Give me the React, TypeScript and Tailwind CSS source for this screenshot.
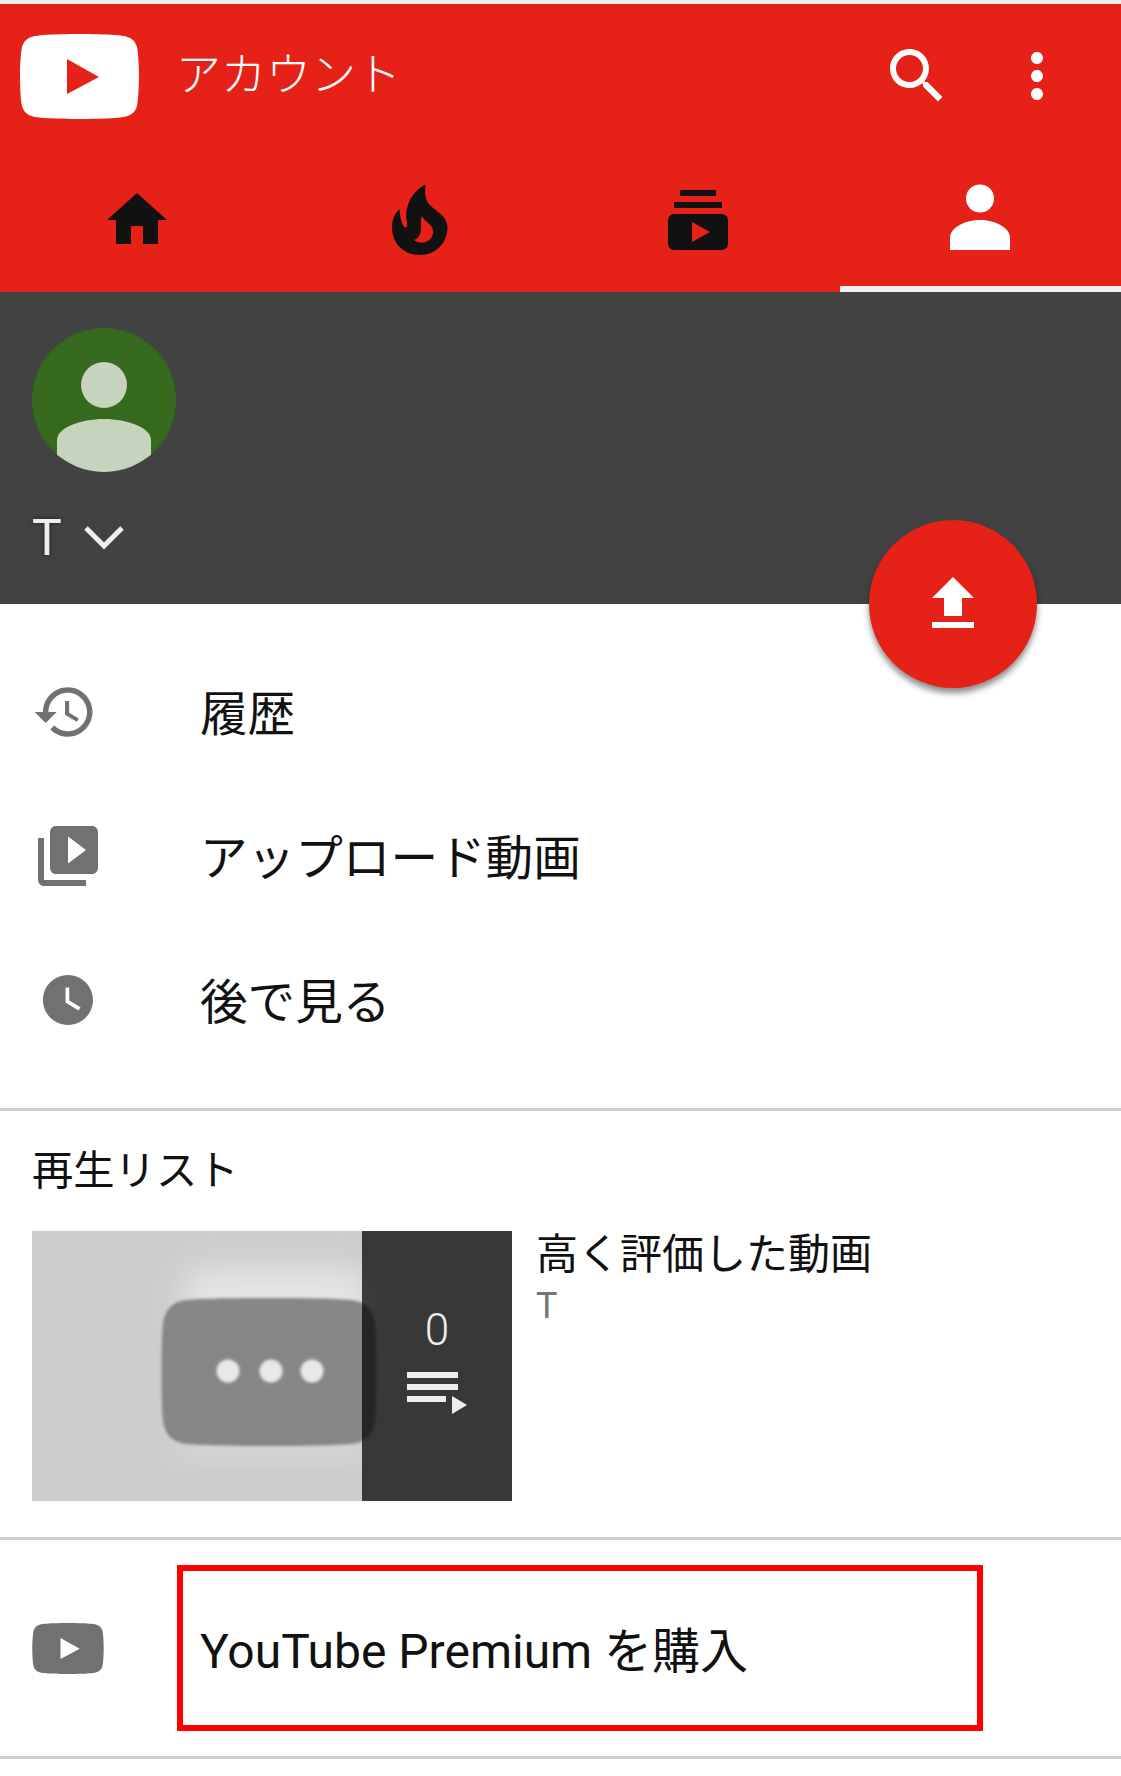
function YouTubeMark({ className }: { className: string }) {
  return (
    <svg viewBox="0 0 119 85" className={className} fill="currentColor" fillRule="evenodd">
      <path d="M59.5 0C59.5 0 22 0 13 2.5 7 4 3 8 1.8 14 0 24 0 42.5 0 42.5S0 61 1.8 71C3 77 7 81 13 82.5 22 85 59.5 85 59.5 85S97 85 106 82.5C112 81 116 77 117.2 71 119 61 119 42.5 119 42.5S119 24 117.2 14C116 8 112 4 106 2.5 97 0 59.5 0 59.5 0ZM47 25 79 43 47 60Z" />
    </svg>
  );
}

function Icon({ d, className }: { d: string; className: string }) {
  return (
    <svg viewBox="0 0 24 24" className={className} fill="currentColor">
      <path d={d} />
    </svg>
  );
}

const searchPath =
  "M15.5 14h-.79l-.28-.27C15.41 12.59 16 11.11 16 9.5 16 5.91 13.09 3 9.5 3S3 5.91 3 9.5 5.91 16 9.5 16c1.61 0 3.09-.59 4.23-1.57l.27.28v.79l5 4.99L20.49 19l-4.99-5zm-6 0C7.01 14 5 11.99 5 9.5S7.01 5 9.5 5 14 7.01 14 9.5 11.99 14 9.5 14z";
const morePath =
  "M12 8c1.1 0 2-.9 2-2s-.9-2-2-2-2 .9-2 2 .9 2 2 2zm0 2c-1.1 0-2 .9-2 2s.9 2 2 2 2-.9 2-2-.9-2-2-2zm0 6c-1.1 0-2 .9-2 2s.9 2 2 2 2-.9 2-2-.9-2-2-2z";
const homePath = "M10 20v-6h4v6h5v-8h3L12 3 2 12h3v8z";
const uploadPath = "M9 16h6v-6h4l-7-7-7 7h4zm-4 2h14v2H5z";
const historyPath =
  "M13 3c-4.97 0-9 4.03-9 9H1l3.89 3.89.07.14L9 12H6c0-3.87 3.13-7 7-7s7 3.13 7 7-3.13 7-7 7c-1.93 0-3.68-.79-4.94-2.06l-1.42 1.42C8.27 19.99 10.51 21 13 21c4.97 0 9-4.03 9-9s-4.03-9-9-9zm-1 5v5l4.28 2.54.72-1.21-3.5-2.08V8H12z";
const libraryPath =
  "M4 6H2v14c0 1.1.9 2 2 2h14v-2H4V6zm16-4H8c-1.1 0-2 .9-2 2v12c0 1.1.9 2 2 2h12c1.1 0 2-.9 2-2V4c0-1.1-.9-2-2-2zm-8 12.5v-9l6 4.5-6 4.5z";
const clockPath =
  "M12 2C6.5 2 2 6.5 2 12s4.5 10 10 10 10-4.5 10-10S17.5 2 12 2zm4.2 14.2L11 13V7h1.5v5.2l4.5 2.7-.8 1.3z";

function FireIcon() {
  return (
    <svg viewBox="0 0 120 100" className="h-[100px] w-[120px] text-[#111111]" fill="currentColor" fillRule="evenodd">
      <path d="M55.5 14.5C55 20 55 27 57 31 60 39 77.5 44 77.5 57 77.5 73 66 85 50 85 33 85 22 73 22 57 22 50 25 43 29.5 39 30 46 31 54 35 57.5 37 57.5 37.5 56 37 52 34 38 41 22 55.5 14.5ZM51.7 46C50 52 52 58 50 64 49 67 46.5 69.5 44 70 46 72 50 73 54 72.5 60 71 64 66 63 60 62 54 55 52 51.7 46Z" />
    </svg>
  );
}

function SubscriptionsIcon() {
  return (
    <svg viewBox="0 0 24 24" className="h-[72px] w-[72px] text-[#111111]" fill="currentColor" fillRule="evenodd">
      <path d="M6 2h12v2H6zM4 6h16v2H4z" />
      <path d="M4 10h16a2 2 0 0 1 2 2v8a2 2 0 0 1-2 2H4a2 2 0 0 1-2-2v-8a2 2 0 0 1 2-2ZM10 12.67v6.66L16 16Z" />
    </svg>
  );
}

function PersonIcon() {
  return (
    <svg viewBox="0 0 72 72" className="h-[72px] w-[72px] text-white" fill="currentColor">
      <circle cx="36" cy="14.5" r="14" />
      <path d="M6 66V54C6 43 22 36 36 36S66 43 66 54V66Z" />
    </svg>
  );
}

function Avatar() {
  return (
    <svg viewBox="0 0 144 144" className="h-[144px] w-[144px] rounded-full bg-[#356a1e] text-[#c6d4bd]" fill="currentColor">
      <circle cx="72" cy="57" r="23" />
      <path d="M25 144V112C25 100 48 91 72 91S119 100 119 112V144Z" />
    </svg>
  );
}

function Thumbnail() {
  return (
    <svg viewBox="0 0 480 270" className="h-[270px] w-[480px]">
      <defs>
        <filter id="soft" x="-30%" y="-30%" width="160%" height="160%">
          <feGaussianBlur stdDeviation="1.5" />
        </filter>
        <filter id="glow" x="-40%" y="-40%" width="180%" height="180%">
          <feGaussianBlur stdDeviation="14" />
        </filter>
      </defs>
      <rect width="480" height="270" fill="#cdcdcd" />
      <rect x="150" y="36" width="190" height="80" rx="30" fill="#e4e4e4" filter="url(#glow)" />
      <rect x="150" y="190" width="180" height="34" rx="16" fill="#d9d9d9" filter="url(#glow)" />
      <path
        d="M237 67C290 67 318 68 325 70 336 73 341 80 343 92 345 110 345 172 343 190 341 202 336 209 325 212 318 214 290 215 237 215S156 214 149 212C138 209 133 202 131 190 129 172 129 110 131 92 133 80 138 73 149 70 156 68 184 67 237 67Z"
        fill="#868686"
        filter="url(#soft)"
      />
      <g fill="#e8e8e8" filter="url(#soft)">
        <circle cx="196" cy="140" r="11.5" />
        <circle cx="239" cy="140" r="11.5" />
        <circle cx="280" cy="140" r="11.5" />
      </g>
    </svg>
  );
}

const rows = [
  { label: "履歴", icon: <Icon d={historyPath} className="h-[66px] w-[66px]" /> },
  { label: "アップロード動画", icon: <Icon d={libraryPath} className="h-[72px] w-[72px]" /> },
  { label: "後で見る", icon: <Icon d={clockPath} className="ml-[6px] h-[60px] w-[60px]" /> },
];

export default function App() {
  return (
    <div className="relative flex h-[1776px] w-[1121px] flex-col overflow-hidden bg-white text-[#111111] [font-family:Roboto,'Noto_Sans_CJK_JP',sans-serif]">
      <div className="h-[4px] bg-[#eeeeee]" />

      {/* Header */}
      <div className="bg-[#e62117]">
        <div className="flex h-[144px] items-center pl-[20px] pr-[48px] text-white">
          <YouTubeMark className="h-[85px] w-[119px]" />
          <span className="ml-[37px] flex-1 text-[45px] font-light">アカウント</span>
          <div className="flex items-center gap-[48px]">
            <Icon d={searchPath} className="h-[72px] w-[72px]" />
            <Icon d={morePath} className="h-[72px] w-[72px]" />
          </div>
        </div>
        <div className="grid h-[144px] grid-cols-[280px_280px_280px_281px]">
          <div className="flex items-center justify-center border-y-[6px] border-transparent pr-[6px] text-[#111111]">
            <Icon d={homePath} className="h-[72px] w-[72px]" />
          </div>
          <div className="flex items-center justify-center border-y-[6px] border-transparent pl-[19px]">
            <FireIcon />
          </div>
          <div className="flex items-center justify-center border-y-[6px] border-transparent pr-[4px]">
            <SubscriptionsIcon />
          </div>
          <div className="flex items-center justify-center border-y-[6px] border-t-transparent border-b-[#f1f1f1] pr-[2px]">
            <PersonIcon />
          </div>
        </div>
      </div>

      {/* Account band */}
      <div className="h-[312px] bg-[#424242] pl-[32px] pt-[36px]">
        <Avatar />
        <div className="mt-[42px] flex h-[48px] items-center gap-[18px] text-[#eeeeee]">
          <span className="text-[50px] leading-none [text-shadow:0_0_4px_rgba(0,0,0,0.5)]">T</span>
          <svg viewBox="0 0 48 48" className="h-[48px] w-[48px]" fill="none" stroke="currentColor" strokeWidth="5">
            <path d="M6 14 24 32 42 14" />
          </svg>
        </div>
      </div>

      {/* Upload button */}
      <div className="absolute left-[869px] top-[520px] flex h-[168px] w-[168px] items-center justify-center rounded-full bg-[#e62117] text-white shadow-[0_5px_6px_rgba(0,0,0,0.45)]">
        <Icon d={uploadPath} className="h-[72px] w-[72px]" />
      </div>

      {/* Menu */}
      <div className="pb-[36px] pt-[36px]">
        {rows.map((row) => (
          <div key={row.label} className="flex h-[144px] items-center pl-[32px]">
            <div className="flex w-[168px] items-center text-[#717171]">{row.icon}</div>
            <span className="pt-[7px] text-[47.6px]">{row.label}</span>
          </div>
        ))}
      </div>
      <div className="h-[3px] bg-[#d0d0d0]" />

      {/* Playlists */}
      <div className="pl-[32px] pt-[30px]">
        <div className="h-[60px] text-[41.3px] leading-[60px]">再生リスト</div>
        <div className="mt-[30px] flex gap-[24px]">
          <div className="relative h-[270px] w-[480px]">
            <Thumbnail />
            <div className="absolute bottom-0 right-0 top-0 flex w-[150px] flex-col items-center bg-black/[.73] pt-[74px] text-[#eeeeee]">
              <span className="h-[50px] text-[44px] font-light leading-[50px]">0</span>
              <svg viewBox="0 0 60 42" className="mt-[17px] h-[42px] w-[60px]" fill="currentColor">
                <path d="M0 0h51v6H0zM0 12h51v6H0zM0 24h39v6H0zM45 24l15 9-15 9Z" />
              </svg>
            </div>
          </div>
          <div>
            <div className="h-[48px] text-[42px] leading-[48px]">高く評価した動画</div>
            <div className="h-[52px] pt-[1px] text-[36px] leading-[52px] text-[#767676]">T</div>
          </div>
        </div>
      </div>
      <div className="mt-[36px] h-[3px] bg-[#d0d0d0]" />

      {/* Premium */}
      <div className="flex h-[216px] items-center pl-[32px]">
        <YouTubeMark className="h-[51px] w-[72px] text-[#717171]" />
        <div className="ml-[73px] flex h-[166px] w-[806px] items-center border-[6px] border-[#ff0000] pl-[17px]">
          <span className="pt-[8px] text-[48px]">YouTube Premium を購入</span>
        </div>
      </div>
      <div className="h-[3px] bg-[#d0d0d0]" />
    </div>
  );
}
